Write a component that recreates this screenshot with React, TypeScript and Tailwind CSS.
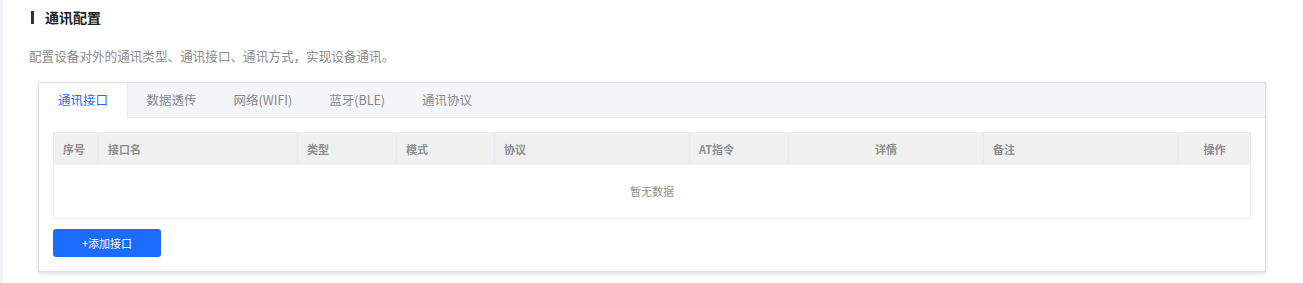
import React from "react";

const font = { fontFamily: '"Microsoft YaHei", "Noto Sans CJK SC", "Noto Sans", sans-serif' };

const cols: { label: string; w: string; align: "left" | "center" }[] = [
  { label: "序号", w: "w-[45px]", align: "left" },
  { label: "接口名", w: "w-[199px]", align: "left" },
  { label: "类型", w: "w-[99px]", align: "left" },
  { label: "模式", w: "w-[98px]", align: "left" },
  { label: "协议", w: "w-[195px]", align: "left" },
  { label: "AT指令", w: "w-[99px]", align: "left" },
  { label: "详情", w: "w-[195px]", align: "center" },
  { label: "备注", w: "w-[195px]", align: "left" },
  { label: "操作", w: "flex-1", align: "center" },
];

const tabs = ["通讯接口", "数据透传", "网络(WIFI)", "蓝牙(BLE)", "通讯协议"];

export default function App() {
  return (
    <div className="flex h-[283px] w-[1303px] bg-[#f0f0f5]" style={font}>
      <div className="ml-[3px] flex-1 bg-white pl-[26px]">
        <div className="mt-[10px] flex h-[14px] items-center">
          <div className="ml-[2px] h-[13px] w-[3px] bg-[#333]" />
          <span className="ml-[11px] text-[14px] font-bold leading-[14px] text-[#222]">通讯配置</span>
        </div>
        <div className="mt-[24px] text-[12.6px] leading-[15px] text-[#8c8c8c]">
          配置设备对外的通讯类型、通讯接口、通讯方式，实现设备通讯。
        </div>
        <div className="ml-[9px] mt-[19px] w-[1228px] border border-[#dcdee6] bg-white shadow-[0_2px_4px_rgba(0,0,0,0.12)]">
          <div className="flex h-[35px] border-b border-[#e4e7ed] bg-[#f4f5f9]">
            {tabs.map((t, i) => (
              <div
                key={t}
                className={
                  i === 0
                    ? "-mb-px flex h-[35px] items-center border-r border-[#e4e7ed] bg-white px-[19px] text-[12.5px] text-[#1a6cff]"
                    : "flex items-center px-[18.5px] text-[12.5px] text-[#8a8a8a]"
                }
              >
                {t}
              </div>
            ))}
          </div>
          <div className="px-[14px] pb-[14px] pt-[14px]">
            <div className="border border-[#ebebf2]">
              <div className="flex h-[32px] bg-[#f0f0f0]">
                {cols.map((c, i) => (
                  <div
                    key={c.label}
                    className={
                      c.w +
                      " flex items-center px-[9px] text-[11px] font-bold text-[#8f8f8f] " +
                      (c.align === "center" ? "justify-center " : "") +
                      (i < cols.length - 1 ? "border-r border-[#e9eaf0]" : "")
                    }
                  >
                    {c.label}
                  </div>
                ))}
              </div>
              <div className="flex h-[53px] items-center justify-center text-[11px] text-[#8f8f8f]">
                暂无数据
              </div>
            </div>
            <button className="mt-[10px] flex h-[28px] w-[108px] items-center justify-center rounded-[3px] bg-[#1a6cff] text-[11px] text-white">
              +添加接口
            </button>
          </div>
        </div>
      </div>
    </div>
  );
}
